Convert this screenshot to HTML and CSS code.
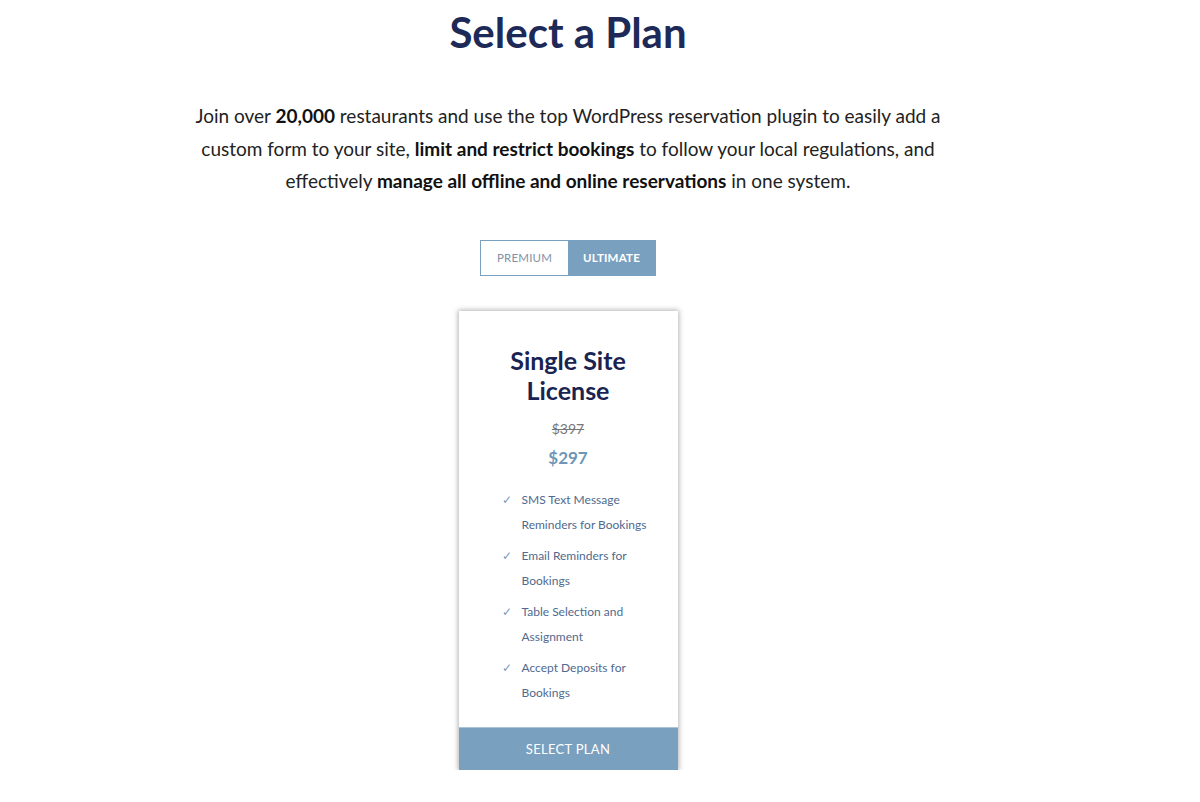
FILE: index.html
```html
<!DOCTYPE html>
<html lang="en">
<head>
  <meta charset="UTF-8" />
  <meta name="viewport" content="width=device-width, initial-scale=1.0" />
  <title>Select a Plan</title>
  <link rel="stylesheet" href="styles.css">
</head>
<body>
  <div class="page">
    <h1 class="page-title">Select a Plan</h1>

    <p class="intro">
      Join over <b>20,000</b> restaurants and use the top WordPress reservation plugin to easily add a<br>
      custom form to your site, <b>limit and restrict bookings</b> to follow your local regulations, and<br>
      effectively <b>manage all offline and online reservations</b> in one system.
    </p>

    <div class="plan-toggle">
      <button class="toggle-btn">PREMIUM</button>
      <button class="toggle-btn active">ULTIMATE</button>
    </div>

    <div class="plan-card">
      <h2 class="plan-name">Single Site License</h2>
      <div class="old-price">$397</div>
      <div class="new-price">$297</div>
      <ul class="features">
        <li>SMS Text Message Reminders for Bookings</li>
        <li>Email Reminders for Bookings</li>
        <li>Table Selection and Assignment</li>
        <li>Accept Deposits for Bookings</li>
      </ul>
      <button class="select-btn">SELECT PLAN</button>
    </div>
  </div>
</body>
</html>
```

FILE: styles.css
```css
body {
  margin: 0;
  background: #fff;
  font-family: Lato, "Open Sans", sans-serif;
  color: #222;
}

.page {
  width: 1136px;
  display: flex;
  flex-direction: column;
  align-items: center;
  text-align: center;
}

.page-title {
  margin: 7px 0 0;
  font-size: 42px;
  line-height: 50px;
  font-weight: 700;
  color: #1d2a57;
}

.intro {
  width: 780px;
  margin: 43px 0 0;
  font-size: 19px;
  line-height: 32.5px;
  color: #222;
}

.intro b {
  font-weight: 700;
  color: #111;
}

.plan-toggle {
  display: flex;
  margin-top: 42px;
  border: 1px solid #7aa0bf;
}

.toggle-btn {
  width: 87px;
  height: 34px;
  border: none;
  background: #fff;
  color: #7f92a8;
  font-family: inherit;
  font-size: 11.5px;
  letter-spacing: 0.2px;
  padding: 0;
}

.toggle-btn.active {
  background: #7aa0bf;
  color: #fff;
  font-weight: 700;
}

.plan-card {
  width: 219px;
  margin-top: 35px;
  background: #fff;
  box-shadow: 0 0 5px 1px rgba(0, 0, 0, 0.3);
  display: flex;
  flex-direction: column;
  align-items: center;
}

.plan-name {
  margin: 34px 20px 0;
  font-size: 25px;
  line-height: 30px;
  font-weight: 700;
  color: #1a2452;
}

.old-price {
  margin-top: 15px;
  font-size: 14px;
  color: #777;
  text-decoration: line-through;
}

.new-price {
  margin-top: 10px;
  font-size: 17px;
  font-weight: 700;
  color: #6d96b8;
}

.features {
  list-style: none;
  margin: 19px 0 0;
  padding: 0 20px 0 43px;
  text-align: left;
  align-self: stretch;
}

.features li {
  position: relative;
  padding-left: 20px;
  margin-bottom: 5px;
  font-size: 12px;
  line-height: 25.5px;
  color: #4f6a8e;
}

.features li::before {
  content: "\2713";
  position: absolute;
  left: 0;
  top: 0;
  font-size: 12px;
  color: #7aa0bf;
}

.select-btn {
  align-self: stretch;
  margin-top: 16px;
  height: 43px;
  border: none;
  border-top: 1px solid #a9c3d8;
  background: #7aa0bf;
  color: #fff;
  font-family: inherit;
  font-size: 13px;
  letter-spacing: 0.3px;
}
```
